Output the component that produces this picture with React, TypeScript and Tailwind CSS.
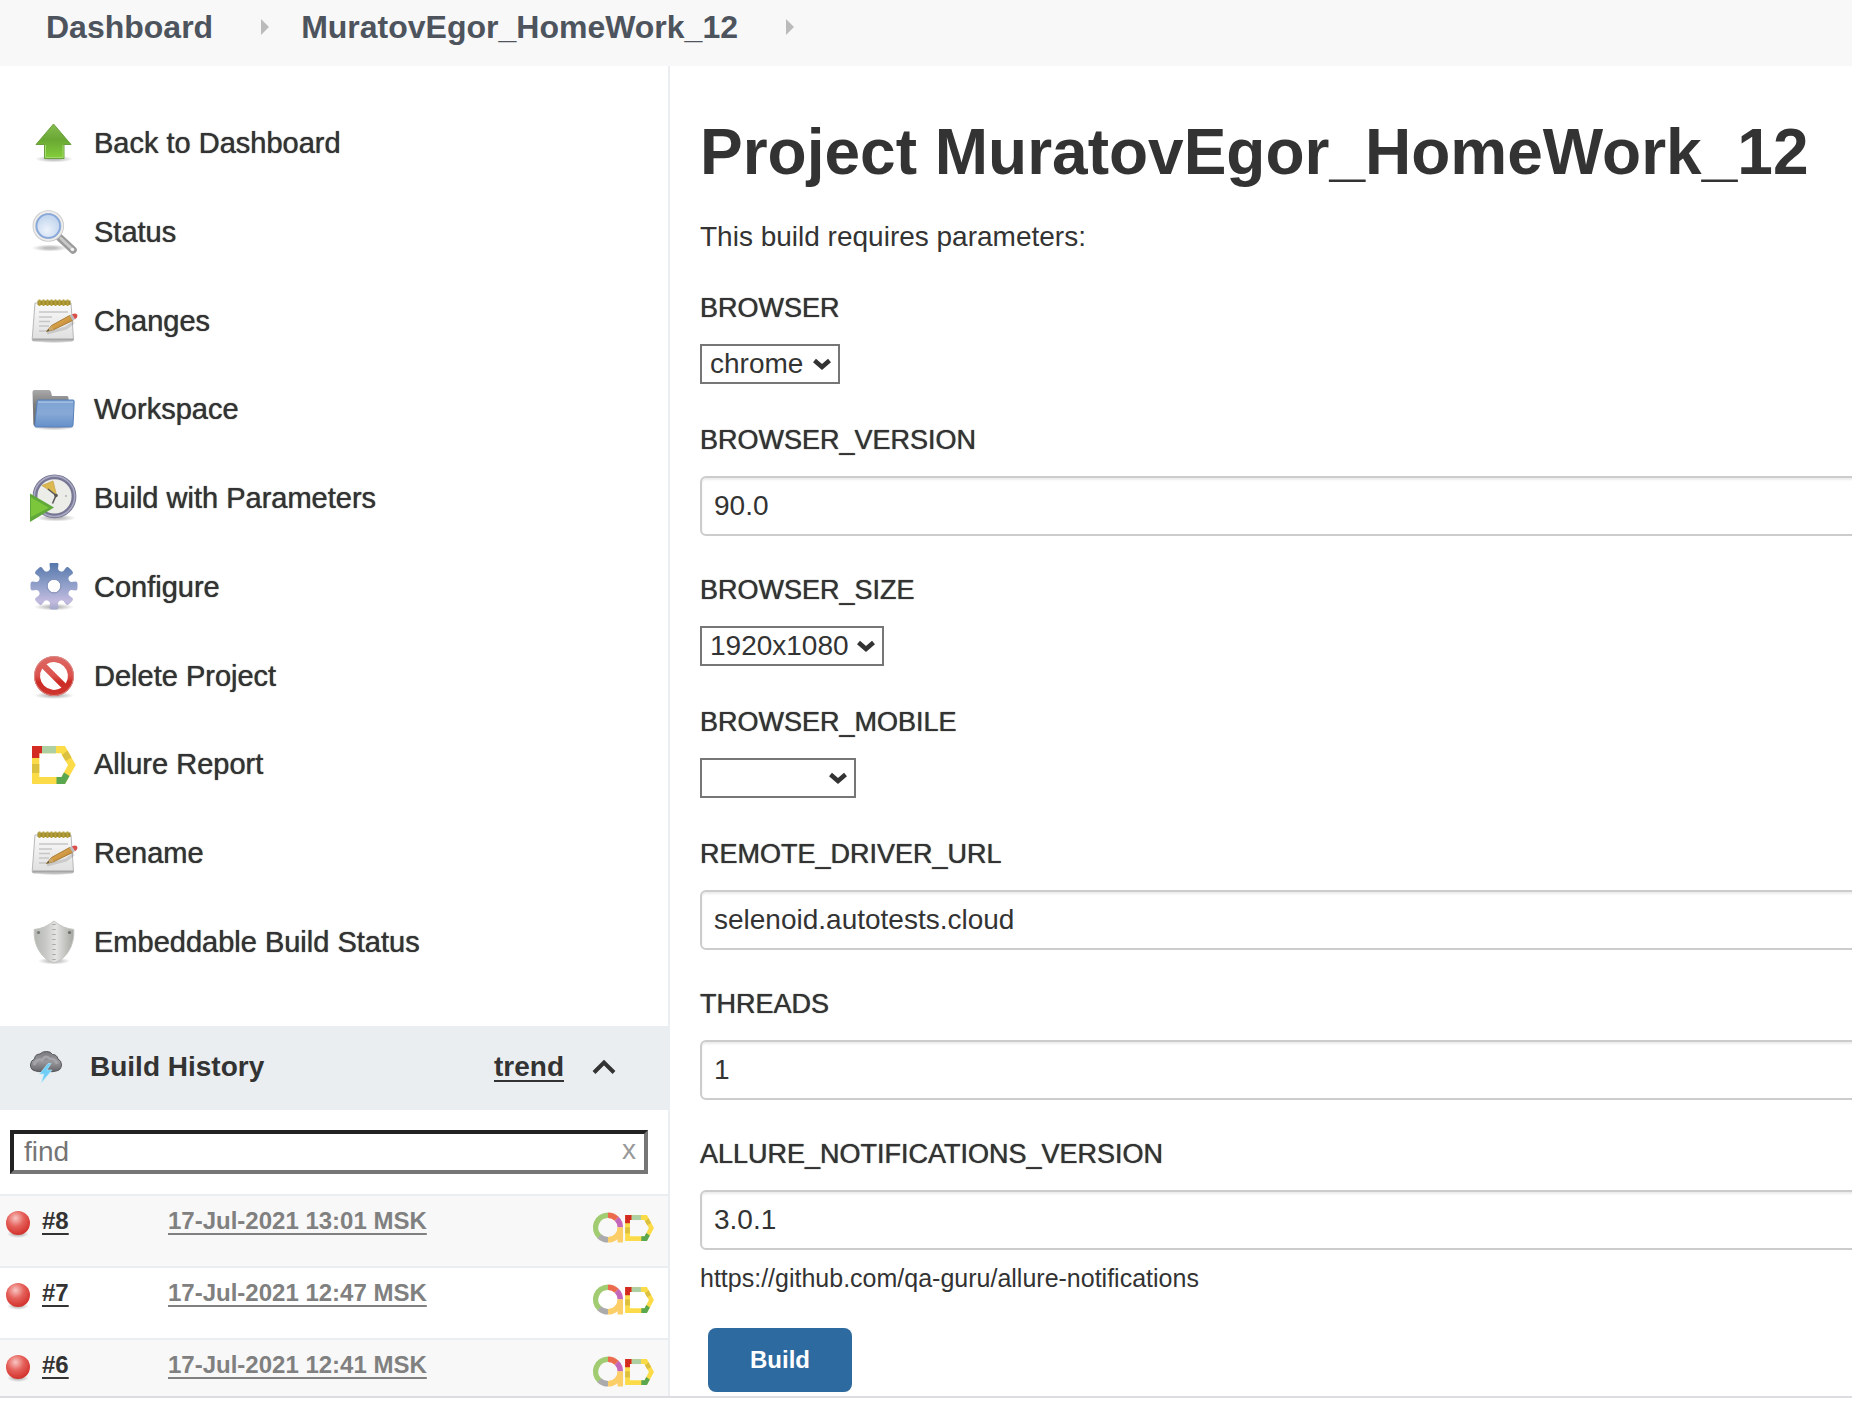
import type { ReactNode } from "react";

function Icon({ children }: { children: ReactNode }) {
  return (
    <svg viewBox="0 0 48 48" className="size-12 shrink-0" aria-hidden="true">
      {children}
    </svg>
  );
}

function Shadow({ cx = 24, cy, rx }: { cx?: number; cy: number; rx: number }) {
  return <ellipse cx={cx} cy={cy} rx={rx} ry={3.5} fill="url(#g-shadow)" />;
}

function GradientDefs() {
  return (
    <svg className="absolute size-0" aria-hidden="true">
      <defs>
        <radialGradient id="g-shadow">
          <stop offset="0.3" stopColor="#000" stopOpacity="0.25" />
          <stop offset="1" stopColor="#000" stopOpacity="0" />
        </radialGradient>
        <linearGradient id="g-arrow" x1="0" y1="0" x2="0" y2="1">
          <stop offset="0" stopColor="#87bd52" />
          <stop offset="0.45" stopColor="#69a733" />
          <stop offset="1" stopColor="#84cf3a" />
        </linearGradient>
        <radialGradient id="g-lens" cx="0.45" cy="0.65">
          <stop offset="0" stopColor="#edf3fb" />
          <stop offset="1" stopColor="#c3d6ee" />
        </radialGradient>
        <linearGradient id="g-paper" x1="0" y1="0" x2="0" y2="1">
          <stop offset="0" stopColor="#fafafa" />
          <stop offset="1" stopColor="#dedede" />
        </linearGradient>
        <linearGradient id="g-pencil" x1="0" y1="0" x2="1" y2="1">
          <stop offset="0" stopColor="#eebd6a" />
          <stop offset="1" stopColor="#b77a22" />
        </linearGradient>
        <linearGradient id="g-folder-back" x1="0" y1="0" x2="0" y2="1">
          <stop offset="0" stopColor="#a9a9a9" />
          <stop offset="0.4" stopColor="#7e7e7e" />
          <stop offset="1" stopColor="#666" />
        </linearGradient>
        <linearGradient id="g-folder" x1="0" y1="0" x2="0" y2="1">
          <stop offset="0" stopColor="#7ea3d3" />
          <stop offset="0.5" stopColor="#86a9d6" />
          <stop offset="1" stopColor="#6590c9" />
        </linearGradient>
        <linearGradient id="g-gear" x1="0" y1="0" x2="0" y2="1">
          <stop offset="0" stopColor="#5577aa" />
          <stop offset="0.45" stopColor="#8f9fc9" />
          <stop offset="0.8" stopColor="#c3bbdf" />
          <stop offset="1" stopColor="#9aa3c4" />
        </linearGradient>
        <linearGradient id="g-stop" x1="0" y1="0" x2="0" y2="1">
          <stop offset="0" stopColor="#dc6a66" />
          <stop offset="0.5" stopColor="#dc524d" />
          <stop offset="0.65" stopColor="#cc2a24" />
          <stop offset="1" stopColor="#cf3731" />
        </linearGradient>
        <linearGradient id="g-shield" x1="0" y1="0" x2="1" y2="0">
          <stop offset="0" stopColor="#b4b6b2" />
          <stop offset="0.3" stopColor="#c9cac7" />
          <stop offset="0.55" stopColor="#e4e5e2" />
          <stop offset="1" stopColor="#a4a6a1" />
        </linearGradient>
        <radialGradient id="g-ball" cx="0.4" cy="0.3" r="0.7">
          <stop offset="0" stopColor="#f9c6c3" />
          <stop offset="0.5" stopColor="#e5605a" />
          <stop offset="1" stopColor="#d3322c" />
        </radialGradient>
        <linearGradient id="g-cloud" x1="0" y1="0" x2="0" y2="1">
          <stop offset="0" stopColor="#7a7a7e" />
          <stop offset="0.5" stopColor="#99999d" />
          <stop offset="1" stopColor="#626266" />
        </linearGradient>
      </defs>
    </svg>
  );
}

const ArrowIcon = () => (
  <Icon>
    <Shadow cy={40} rx={19} />
    <path d="M23.5 5 41 25.5H34V39.5H14.500V25.500H6Z" fill="url(#g-arrow)" stroke="#6b9f3d" strokeWidth="1" strokeLinejoin="round" />
    <path d="M15.500 26V38.500H33V26" fill="none" stroke="#a3dc6c" strokeWidth="1" />
  </Icon>
);

const SearchIcon = () => (
  <Icon>
    <Shadow cx={20} cy={40} rx={18} />
    <path d="M29 29 43 42" stroke="#9b9b9b" strokeWidth="7.500" strokeLinecap="round" />
    <path d="M30 29.500 42 41" stroke="#c9c9c9" strokeWidth="3" />
    <circle cx="42.500" cy="41.500" r="1.800" fill="#f3f3f3" />
    <circle cx="18.300" cy="18" r="14" fill="url(#g-lens)" stroke="#c9c9c9" strokeWidth="3.500" />
    <circle cx="18.300" cy="18" r="14" fill="none" stroke="#ededed" strokeWidth="1.800" />
    <circle cx="18.300" cy="18" r="11.800" fill="none" stroke="#86a8dc" strokeWidth="1.800" />
  </Icon>
);

const NotepadIcon = () => (
  <Icon>
    <Shadow cy={43} rx={20} />
    <path d="M5 6H41L43.500 42Q43.500 44 41.500 44H4Q2 44 2.200 42Z" fill="url(#g-paper)" stroke="#b9b9b9" strokeWidth="1" />
    <path d="M2.500 42.500H43.500" stroke="#a5a5a5" strokeWidth="2" />
    <rect x="7.500" y="3.500" width="33" height="4.500" fill="#9c8a2c" />
    <path d="M9.500 2.500V9M13.500 2.500V9M17.500 2.500V9M21.500 2.500V9M25.500 2.500V9M29.500 2.500V9M33.500 2.500V9M37.500 2.500V9" stroke="#b5a03a" strokeWidth="2" />
    <path d="M9 15H38M9 20H22M9 24.500H20M9 29H19M9 34H17" stroke="#c6c6c6" strokeWidth="1.600" />
    <path d="M17 36 36 31 44 25" stroke="#000" strokeOpacity="0.12" strokeWidth="3" fill="none" />
    <path d="M16.500 34.500 21.500 28.500 40 18.300 43 23.300 23.500 32.800Z" fill="url(#g-pencil)" stroke="#9c6d22" strokeWidth="0.800" />
    <path d="M16.500 34.500 21.500 28.500 23.500 32.800Z" fill="#c9a76a" />
    <path d="M16.500 34.500 18.500 32 19.300 33.500Z" fill="#444" />
    <path d="M39.500 18.300 42 17.200 45 22.200 42.500 23.600Z" fill="#b9bcc0" />
    <path d="M42 17.200Q46 15.500 47.200 17.800 48.200 20.500 45 22.200Z" fill="#d9504a" />
  </Icon>
);

const FolderIcon = () => (
  <Icon>
    <Shadow cy={42} rx={22} />
    <path d="M2.500 7Q2.500 5 4.500 5H18.500Q20.500 5 21 7L22 11H37Q38.500 11 38.500 13V41H5Q3.500 41 3.400 39Z" fill="url(#g-folder-back)" />
    <path d="M8.500 15H43Q44.300 15 44.200 16.500L43 40Q42.900 42 41 42H6Q4.500 42 4.800 40L7.200 16.500Q7.400 15 8.500 15Z" fill="url(#g-folder)" stroke="#557fb8" strokeWidth="1" />
    <path d="M8 17.200H43" stroke="#a7c3e8" strokeWidth="1.200" />
  </Icon>
);

const ClockIcon = () => (
  <Icon>
    <Shadow cx={26} cy={44} rx={20} />
    <circle cx="24.500" cy="22.300" r="19.500" fill="#ecece9" stroke="#777795" strokeWidth="4.800" />
    <circle cx="24.500" cy="22.300" r="20.200" fill="none" stroke="#a9a9c2" strokeWidth="1.600" />
    <circle cx="36" cy="22" r="0.900" fill="#aaa" />
    <path d="M12 11.500 23 7 26.500 21Z" fill="#dcb950" stroke="#c6a44c" strokeWidth="0.800" />
    <path d="M18 15 26 21.500 22.500 29.500" fill="none" stroke="#5c5c5c" strokeWidth="1.600" />
    <circle cx="26" cy="21.500" r="1.800" fill="#555" />
    <path d="M0 19.500 24 33.500 0 48Z" fill="#61a83a" />
    <path d="M1 23.500 19 33.700 1 43Z" fill="#7cc63b" />
  </Icon>
);

const TEETH = [0, 45, 90, 135, 180, 225, 270, 315];

const GearIcon = () => (
  <Icon>
    <Shadow cy={44} rx={20} />
    <mask id="gear-shape">
      {TEETH.map((angle) => (
        <path key={angle} d="M17 11 20 6 19.500 1Q20 -0.500 22 -0.500H26Q28 -0.500 28.500 1L28 6 31 11Z" fill="#fff" transform={`rotate(${angle} 24 23)`} />
      ))}
      <circle cx="24" cy="23" r="16" fill="#fff" />
      <circle cx="24" cy="23" r="6.300" fill="#000" />
    </mask>
    <rect width="48" height="48" fill="url(#g-gear)" mask="url(#gear-shape)" />
    <circle cx="24" cy="23" r="7" fill="none" stroke="#8290b8" strokeWidth="1" />
  </Icon>
);

const StopIcon = () => (
  <Icon>
    <Shadow cy={43.5} rx={20} />
    <circle cx="24" cy="24" r="17" fill="#fff" />
    <path
      d="M24 4A20 20 0 1 1 24 44A20 20 0 1 1 24 4ZM16.500 12.200 35.800 31.500A14 14 0 0 0 16.500 12.200ZM12.200 16.500A14 14 0 0 0 31.500 35.800Z"
      fill="url(#g-stop)"
      fillRule="evenodd"
    />
    <circle cx="24" cy="24" r="19.500" fill="none" stroke="#d98c88" strokeWidth="1" />
  </Icon>
);

function AllureMark() {
  return (
    <>
      <path d="M2 6H35L45.700 25 35 44H2ZM9.300 13.300V37H31.500L38 25 31 13.300Z" fill="#fbdc48" fillRule="evenodd" />
      <path d="M2 6H12V13.300H9.300V18H2Z" fill="#d32a22" />
      <path d="M12 6H26V13.300H12Z" fill="#aecfa2" />
      <path d="M2 24H9.300V33H2Z" fill="#dcc03f" />
      <path d="M32 15 37.500 10.500 41.500 17.500 35.500 21Z" fill="#dcc03f" />
      <path d="M26.500 37H31.500L34 32.500 39.500 36 35 44H26.500Z" fill="#5aa750" />
    </>
  );
}

const AllureIcon = () => (
  <Icon>
    <AllureMark />
  </Icon>
);

const ShieldIcon = () => (
  <Icon>
    <Shadow cy={43} rx={16} />
    <path d="M24 3Q33 10.500 43.800 11.500 44.500 24 38.500 33.500 33 42 24 45 15 42 9.500 33.500 3.500 24 4.200 11.500 15 10.500 24 3Z" fill="url(#g-shield)" stroke="#c4c6c1" strokeWidth="1" />
    <path d="M24 6V42" stroke="#a9aba7" strokeWidth="3.500" strokeDasharray="1 4" />
    <circle cx="8.500" cy="14.500" r="1.600" fill="#777975" />
    <circle cx="39.500" cy="14.500" r="1.600" fill="#6d6f6b" />
  </Icon>
);

function StormIcon() {
  return (
    <svg viewBox="0 0 32 32" className="size-8 shrink-0" aria-hidden="true">
      <path
        d="M6 20Q0.500 19.500 0.500 14 0.500 9.500 4.500 8 5 3 10 3 12 0.500 16.500 0.500 21 0.500 22.500 3.500 27 3.500 28 8 31.500 9.500 31.500 14 31 19.500 26 20 22 21.500 18 20 14 22 11 20.500 8 21 6 20Z"
        fill="url(#g-cloud)"
        stroke="#55555a"
        strokeWidth="1"
      />
      <path d="M4 14Q7 7 12 9 16 3 20 8 25 7 27 13" fill="none" stroke="#a6a6aa" strokeWidth="2.500" />
      <path d="M18 12.500 9.500 23H14L11.500 31.500 22 19H17L21 12.500Z" fill="#6fcdf6" stroke="#b4e7fb" strokeWidth="0.600" />
    </svg>
  );
}

function FailedBall() {
  return (
    <svg viewBox="0 0 28 32" className="h-8 w-7" role="img" aria-label="Failed">
      <ellipse cx="14" cy="26" rx="11" ry="4" fill="url(#g-shadow)" />
      <circle cx="14" cy="15" r="12" fill="url(#g-ball)" />
    </svg>
  );
}

function QaLogo() {
  return (
    <svg viewBox="0 0 64 32" className="h-8 w-16" role="img" aria-label="Allure Report">
      <g fill="none" strokeWidth="5.500">
        <path d="M7.500 24.500A12.300 12.300 0 0 1 16 3.200" stroke="#a1cc72" />
        <path d="M16 3.200A12.300 12.300 0 0 1 24.700 6.800" stroke="#ec6b4c" />
        <path d="M24.700 6.800A12.300 12.300 0 0 1 28.300 15.500" stroke="#c566b9" />
        <path d="M28.300 15.500A12.300 12.300 0 0 1 16 27.800" stroke="#fbce68" />
        <path d="M28.300 15.500V30.500" stroke="#fbce68" />
        <path d="M16 27.800A12.300 12.300 0 0 1 7.300 24.200" stroke="#ababab" />
      </g>
      <g transform="translate(31.800 -1) scale(0.660 0.680)">
        <AllureMark />
      </g>
    </svg>
  );
}

const TASKS = [
  { label: "Back to Dashboard", Glyph: ArrowIcon },
  { label: "Status", Glyph: SearchIcon },
  { label: "Changes", Glyph: NotepadIcon },
  { label: "Workspace", Glyph: FolderIcon },
  { label: "Build with Parameters", Glyph: ClockIcon },
  { label: "Configure", Glyph: GearIcon },
  { label: "Delete Project", Glyph: StopIcon },
  { label: "Allure Report", Glyph: AllureIcon },
  { label: "Rename", Glyph: NotepadIcon },
  { label: "Embeddable Build Status", Glyph: ShieldIcon },
];

const BUILDS = [
  { id: "#8", date: "17-Jul-2021 13:01 MSK" },
  { id: "#7", date: "17-Jul-2021 12:47 MSK" },
  { id: "#6", date: "17-Jul-2021 12:41 MSK" },
];

function Crumb({ label }: { label: string }) {
  return (
    <>
      <a href="#" className="text-[32px] leading-9 font-bold text-[#4d545d]">
        {label}
      </a>
      <svg viewBox="0 0 8 16" className="mr-8 ml-12 h-4 w-2" aria-hidden="true">
        <path d="M0 0 8 8 0 16Z" fill="#bbb" />
      </svg>
    </>
  );
}

function Field({ name, children }: { name: string; children: ReactNode }) {
  return (
    <div className="mb-[38px]">
      <label htmlFor={name} className="mb-5 block text-[27px] leading-8 [text-shadow:0_0_1px_#333]">
        {name}
      </label>
      {children}
    </div>
  );
}

function TextField({ name, value }: { name: string; value: string }) {
  return (
    <Field name={name}>
      <input
        id={name}
        type="text"
        defaultValue={value}
        className="block h-15 w-[calc(100%+40px)] rounded-md border-2 border-[#ccc] bg-white px-3 text-[28px] shadow-[inset_0_2px_2px_rgba(0,0,0,0.075)] outline-none"
      />
    </Field>
  );
}

function SelectField({ name, options, width }: { name: string; options: string[]; width: string }) {
  return (
    <Field name={name}>
      <div className={`relative pb-0.5 ${width}`}>
        <select id={name} className="block h-10 w-full appearance-none border-2 border-[#767676] bg-white pl-2 text-[28px] leading-9 outline-none">
          {options.map((option) => (
            <option key={option}>{option}</option>
          ))}
        </select>
        <svg viewBox="0 0 20 12" className="pointer-events-none absolute top-3.5 right-2 h-3 w-5" aria-hidden="true">
          <path d="M2.500 2.500 10 9 17.500 2.500" fill="none" stroke="#333" strokeWidth="4.500" />
        </svg>
      </div>
    </Field>
  );
}

function BuildHistory() {
  return (
    <section className="mt-10">
      <div className="flex h-21 items-center bg-[#eaeef1] pr-[52px] pb-0.5 pl-[30px]">
        <StormIcon />
        <h2 className="ml-7 text-[28px] leading-8 font-bold">Build History</h2>
        <a href="#" className="ml-auto text-[28px] leading-8 font-bold underline decoration-2 underline-offset-4">
          trend
        </a>
        <button type="button" aria-label="Collapse" className="ml-7">
          <svg viewBox="0 0 24 16" className="h-4 w-6" aria-hidden="true">
            <path d="M2 13.500 12 3.500 22 13.500" fill="none" stroke="#333" strokeWidth="4" />
          </svg>
        </button>
      </div>
      <div className="relative mt-5 mr-5 ml-2.5">
        <input
          type="text"
          aria-label="find"
          placeholder="find"
          className="block h-11 w-full border-4 border-t-[#222] border-r-[#767676] border-b-[#767676] border-l-[#222] bg-white px-2.5 text-[28px] outline-none placeholder:text-[#757575]"
        />
        <button type="button" aria-label="Clear" className="absolute top-0 right-3 h-10 text-[28px] leading-10 text-[#999]">
          x
        </button>
      </div>
      <table className="mt-5 w-full border-collapse">
        <tbody>
          {BUILDS.map(({ id, date }) => (
            <tr key={id} className="h-18 border-t-2 border-[#eaeef1] align-top text-2xl leading-7 font-bold odd:bg-[#f8f8f8]">
              <td className="w-[42px] pt-3 pl-1">
                <FailedBall />
              </td>
              <td className="w-[126px] pt-[11px]">
                <a href="#" className="underline decoration-2 underline-offset-4">
                  {id}
                </a>
              </td>
              <td className="pt-[11px]">
                <a href="#" className="text-[#808080] underline decoration-2 underline-offset-4">
                  {date}
                </a>
              </td>
              <td className="w-[76px] pt-4">
                <QaLogo />
              </td>
            </tr>
          ))}
        </tbody>
      </table>
    </section>
  );
}

export default function App() {
  return (
    <div className="flex h-screen flex-col bg-white pb-2 font-['Liberation_Sans',Arial,sans-serif] text-[#333]">
      <GradientDefs />
      <nav className="flex h-[66px] shrink-0 items-center bg-[#f8f8f8] pb-3 pl-[46px]">
        <Crumb label="Dashboard" />
        <Crumb label="MuratovEgor_HomeWork_12" />
      </nav>
      <div className="flex min-h-0 flex-1 overflow-hidden border-b-2 border-[#dcdde1]">
        <aside className="w-[670px] shrink-0 border-r-2 border-[#eaeef1] pt-[33px]">
          <ul className="grid min-h-[887px] auto-rows-fr">
            {TASKS.map(({ label, Glyph }) => (
              <li key={label} className="flex items-center pl-[30px]">
                <a href="#" className="flex items-center gap-4 text-[29px] leading-8 [text-shadow:0_0_1px_#333]">
                  <Glyph />
                  {label}
                </a>
              </li>
            ))}
          </ul>
          <BuildHistory />
        </aside>
        <main className="min-w-0 flex-1 overflow-hidden pt-[50px] pl-[30px]">
          <h1 className="text-[64px] leading-[72px] font-bold whitespace-nowrap">Project MuratovEgor_HomeWork_12</h1>
          <p className="mt-[33px] mb-[39px] text-[28px] leading-8">This build requires parameters:</p>
          <form>
            <SelectField name="BROWSER" options={["chrome", "firefox", "opera"]} width="w-[140px]" />
            <TextField name="BROWSER_VERSION" value="90.0" />
            <SelectField name="BROWSER_SIZE" options={["1920x1080", "1366x768"]} width="w-[184px]" />
            <SelectField name="BROWSER_MOBILE" options={[""]} width="w-[156px]" />
            <TextField name="REMOTE_DRIVER_URL" value="selenoid.autotests.cloud" />
            <TextField name="THREADS" value="1" />
            <TextField name="ALLURE_NOTIFICATIONS_VERSION" value="3.0.1" />
            <p className="-mt-6 text-[25px] leading-7">https://github.com/qa-guru/allure-notifications</p>
            <button type="button" className="mt-9 ml-2 h-16 w-36 rounded-lg bg-[#2d6a9f] text-2xl font-bold text-white">
              Build
            </button>
          </form>
        </main>
      </div>
    </div>
  );
}
